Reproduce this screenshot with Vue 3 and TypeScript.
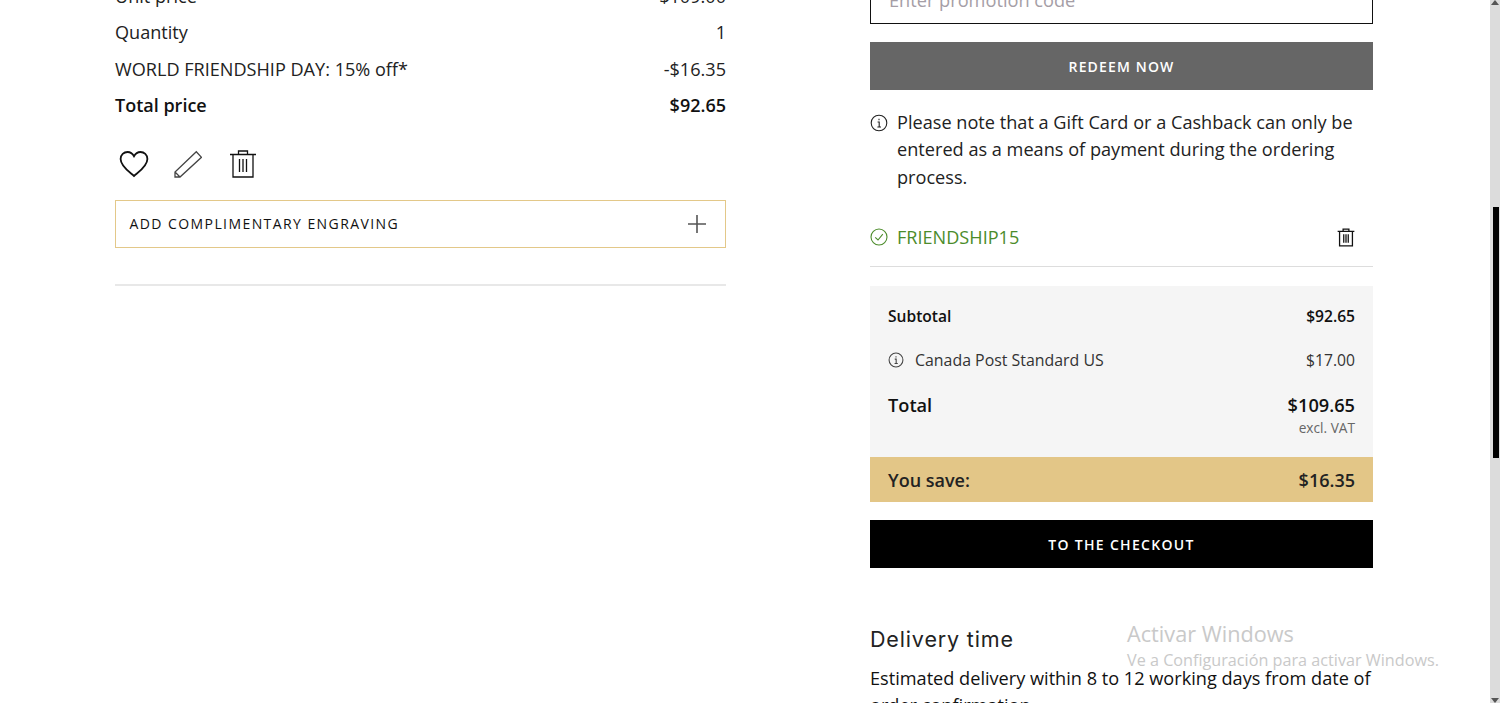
<script setup lang="ts">
const lines: { label: string; value: string; bold?: boolean }[] = [
  { label: 'Unit price', value: '$109.00' },
  { label: 'Quantity', value: '1' },
  { label: 'WORLD FRIENDSHIP DAY: 15% off*', value: '-$16.35' },
  { label: 'Total price', value: '$92.65', bold: true },
]
</script>

<template>
  <div class="viewport">
    <div class="page">
      <section class="left">
        <div v-for="l in lines" :key="l.label" class="line" :class="{ bold: l.bold }">
          <span>{{ l.label }}</span><span>{{ l.value }}</span>
        </div>
        <div class="actions">
          <svg class="ic-heart" width="30" height="28" viewBox="0 0 30 28" fill="none" stroke="#111" stroke-width="1.8">
            <path d="M15 26 C11 22.4 1.6 16.5 1.6 9 C1.6 4.8 4.9 2 8.5 2 C11.2 2 13.6 3.6 15 6.2 C16.4 3.6 18.8 2 21.5 2 C25.1 2 28.4 4.8 28.4 9 C28.4 16.5 19 22.4 15 26 Z" />
          </svg>
          <svg class="ic-pen" width="28" height="28" viewBox="0 0 28 28" fill="none" stroke="#444" stroke-width="1.3">
            <path d="M1 27 L1 22 L22.3 1.7 L27.5 7.3 L6 27 Z M1 22 L6 27" />
          </svg>
          <svg class="ic-trash" width="28" height="28" viewBox="0 0 28 28" fill="none" stroke="#111" stroke-width="1.3">
            <path d="M1 4.5 H27 M9.5 4.5 V1 H18.5 V4.5 M4 4.5 V27 H24 V4.5 M10.5 9 V22 M14 9 V22 M17.5 9 V22" />
          </svg>
        </div>
        <div class="engrave">
          <span>ADD COMPLIMENTARY ENGRAVING</span>
          <svg width="20" height="20" viewBox="0 0 20 20" stroke="#555" stroke-width="1.6"><path d="M10 1 V19 M1 10 H19" /></svg>
        </div>
        <div class="rule"></div>
      </section>

      <section class="right">
        <div class="promo">Enter promotion code</div>
        <button class="btn grey">REDEEM NOW</button>
        <div class="note">
          <svg class="info" width="18" height="18" viewBox="0 0 18 18" fill="none" stroke="#222" stroke-width="1.1">
            <circle cx="9" cy="9" r="7.8" /><path d="M7.6 8 H9.2 V13 M7.4 13 H11 M9 4.8 V6.2" />
          </svg>
          <p>Please note that a Gift Card or a Cashback can only be entered as a means of payment during the ordering process.</p>
        </div>
        <div class="code">
          <div class="code-l">
            <svg width="18" height="18" viewBox="0 0 18 18" fill="none" stroke="#4c8c2b" stroke-width="1.1">
              <circle cx="9" cy="9" r="8" /><path d="M5.2 9.4 L8 12 L12.8 6.2" />
            </svg>
            <span>FRIENDSHIP15</span>
          </div>
          <svg width="18" height="19" viewBox="0 0 28 28" fill="none" stroke="#111" stroke-width="2">
            <path d="M1 4.5 H27 M9.5 4.5 V1 H18.5 V4.5 M4 4.5 V27 H24 V4.5 M10.5 9 V22 M14 9 V22 M17.5 9 V22" />
          </svg>
        </div>
        <div class="summary">
          <div class="row sub"><span>Subtotal</span><span>$92.65</span></div>
          <div class="row ship">
            <span class="ship-l">
              <svg width="16" height="16" viewBox="0 0 18 18" fill="none" stroke="#444" stroke-width="1.2">
                <circle cx="9" cy="9" r="7.8" /><path d="M7.6 8 H9.2 V13 M7.4 13 H11 M9 4.8 V6.2" />
              </svg>
              Canada Post Standard US
            </span>
            <span>$17.00</span>
          </div>
          <div class="row total"><span>Total</span><span>$109.65</span></div>
          <div class="vat">excl. VAT</div>
        </div>
        <div class="save"><span>You save:</span><span>$16.35</span></div>
        <button class="btn black">TO THE CHECKOUT</button>
        <h3>Delivery time</h3>
        <p class="delivery">Estimated delivery within 8 to 12 working days from date of order confirmation.</p>
      </section>
    </div>

    <div class="watermark">
      <div class="wm1">Activar Windows</div>
      <div class="wm2">Ve a Configuración para activar Windows.</div>
    </div>

    <div class="scrollbar">
      <svg class="arrow up" width="8" height="5" viewBox="0 0 8 5"><path d="M0 5 L4 0 L8 5 Z" fill="#555" /></svg>
      <div class="thumb"></div>
      <svg class="arrow down" width="8" height="5" viewBox="0 0 8 5"><path d="M0 0 L4 5 L8 0 Z" fill="#555" /></svg>
    </div>
  </div>
</template>

<style>
html, body { margin: 0; overflow: hidden; background: #fff; }
</style>

<style scoped>
.viewport {
  position: relative;
  height: 703px;
  overflow: hidden;
  font-family: "Open Sans", sans-serif;
  color: #222;
  background: #fff;
}
.page {
  display: flex;
  align-items: flex-start;
  padding-left: 115px;
  gap: 144px;
  margin-top: -24px;
}
.left { width: 611px; flex: none; padding-top: 2px; }
.line {
  display: flex;
  justify-content: space-between;
  font-size: 18.1px;
  line-height: 36.4px;
  height: 36.4px;
}
.line.bold { font-weight: 600; color: #111; font-size: 18px; }
.actions {
  display: flex;
  align-items: center;
  margin-top: 24px;
  padding-left: 4px;
  height: 32px;
}
.ic-heart { margin-right: 25px; }
.ic-pen { margin-right: 27px; }
.engrave {
  box-sizing: border-box;
  height: 48px;
  margin-top: 20px;
  border: 1px solid #e3c889;
  padding: 0 18px 0 13.5px;
  display: flex;
  align-items: center;
  justify-content: space-between;
  font-size: 14px;
  font-weight: 500;
  letter-spacing: 1.42px;
  color: #111;
}
.rule { height: 2px; background: #e8e8e8; margin-top: 36px; }

.right { width: 503px; flex: none; }
.promo {
  box-sizing: border-box;
  height: 48px;
  border: 1px solid #111;
  border-top: 0;
  padding: 12px 18px 0;
  line-height: 24px;
  font-size: 18.2px;
  color: #a59ea6;
}
.btn {
  display: block;
  width: 100%;
  height: 48px;
  border: 0;
  font-family: inherit;
  font-size: 14px;
  font-weight: 600;
  letter-spacing: 1.3px;
  color: #fff;
  padding: 0;
}
.btn.grey { background: #666; margin-top: 18px; letter-spacing: 1.15px; }
.btn.black { background: #000; margin-top: 18px; }
.note { display: flex; gap: 9px; margin-top: 19px; }
.note .info { flex: none; margin-top: 5px; }
.note p { margin: 0; font-size: 18.15px; line-height: 27.4px; color: #222; }
.code {
  box-sizing: border-box;
  height: 59px;
  margin-top: 17px;
  padding: 0 18px 0 0;
  border-bottom: 1px solid #ddd;
  display: flex;
  align-items: center;
  justify-content: space-between;
}
.code-l { display: flex; align-items: center; gap: 9px; font-size: 18.1px; color: #4c8c2b; }
.summary {
  margin-top: 19px;
  background: #f5f5f5;
  padding: 0 18px;
  height: 171px;
  box-sizing: border-box;
}
.row { display: flex; justify-content: space-between; align-items: center; }
.sub { font-size: 15.6px; font-weight: 600; color: #111; padding-top: 16px; height: 28px; line-height: 28px; }
.ship { font-size: 15.9px; color: #333; margin-top: 16px; height: 28px; }
.ship-l { display: flex; align-items: center; gap: 11px; }
.ship span:last-child { font-size: 15.7px; }
.total { font-size: 18.2px; font-weight: 600; color: #111; margin-top: 17px; height: 28px; }
.vat { text-align: right; font-size: 13.7px; color: #666; line-height: 18px; }
.save {
  box-sizing: border-box;
  height: 45px;
  background: #e3c687;
  padding: 0 18px;
  display: flex;
  align-items: center;
  justify-content: space-between;
  font-size: 18px;
  font-weight: 600;
  color: #222;
}
h3 {
  font-family: "Inter", sans-serif;
  font-weight: 400;
  font-size: 21.5px;
  letter-spacing: 0.85px;
  line-height: 30px;
  margin: 56px 0 0;
  color: #222;
}
.delivery { margin: 11px 0 0; font-size: 18.15px; line-height: 27px; color: #111; }
.watermark {
  position: absolute;
  left: 1127px;
  top: 620px;
  font-family: "Open Sans", sans-serif;
  color: #c9c9c9;
  pointer-events: none;
}
.wm1 { font-size: 21.7px; line-height: 28px; }
.wm2 { font-size: 16.2px; line-height: 22px; margin-top: 1px; }
.scrollbar {
  position: absolute;
  right: 0;
  top: 0;
  bottom: 0;
  width: 10px;
  background: #dcdcdc;
}
.thumb {
  position: absolute;
  left: 3px;
  right: 1px;
  top: 207px;
  height: 251px;
  background: #000;
}
.arrow { position: absolute; left: 1px; }
.arrow.up { top: 0; }
.arrow.down { bottom: 0; }
</style>
